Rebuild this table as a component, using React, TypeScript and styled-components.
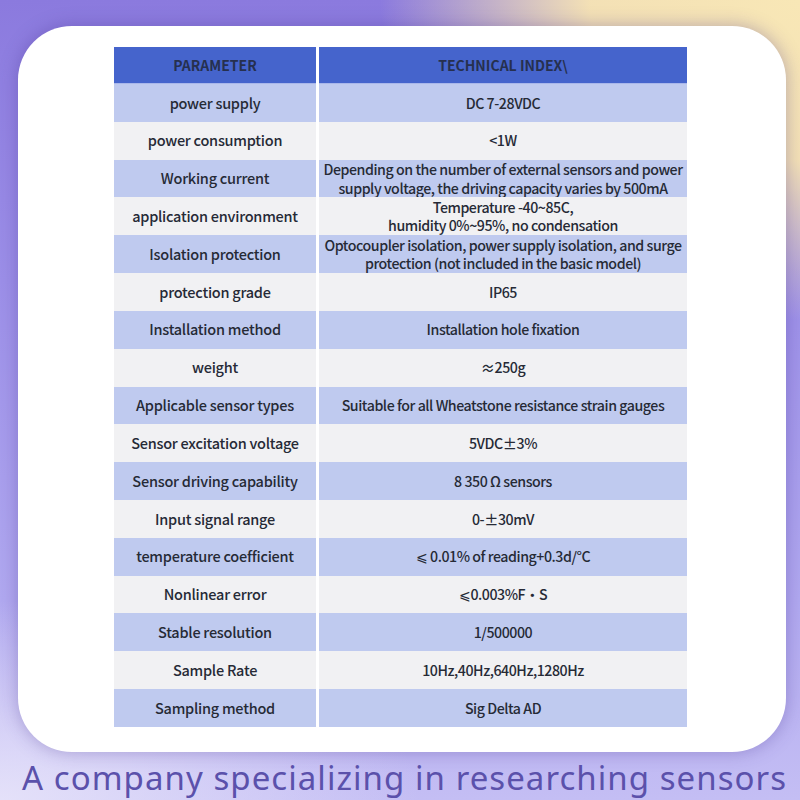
import React from "react";
import styled, { createGlobalStyle } from "styled-components";

const Global = createGlobalStyle`
  html, body { margin: 0; padding: 0; }
  body { width: 800px; height: 800px; overflow: hidden; }
`;

const Page = styled.div`
  position: relative;
  width: 800px;
  height: 800px;
  box-sizing: border-box;
  padding: 26px 14px 0 18px;
  display: flex;
  flex-direction: column;
  background:
    radial-gradient(ellipse 420px 320px at 100% 0%, rgba(248, 231, 182, 1) 0%, rgba(247, 228, 180, 0.97) 50%, rgba(247, 228, 180, 0) 100%),
    radial-gradient(ellipse 420px 200px at 0% 100%, rgba(232, 229, 250, 0.9) 0%, rgba(232, 229, 250, 0) 100%),
    linear-gradient(180deg, #8b7ade 0%, #9c8fe8 35%, #b1a9f0 75%, #c4bef4 100%);
  font-family: "Noto Sans CJK SC", "Noto Sans", sans-serif;
`;

const Card = styled.div`
  width: 768px;
  height: 729px;
  box-sizing: border-box;
  background: #ffffff;
  border-radius: 54px;
  box-shadow: 0 0 18px rgba(70, 50, 140, 0.35);
  padding: 21px 0 0 96px;
`;

const Table = styled.div`
  width: 573px;
  height: 680px;
  display: grid;
  grid-template-columns: 202px 368px;
  grid-template-rows: 37px repeat(17, 37.82px);
  column-gap: 3px;
`;

const HeadCell = styled.div`
  background: #4564cc;
  color: #26304f;
  font-size: 14px;
  font-weight: 700;
  display: flex;
  align-items: center;
  justify-content: center;
  border-bottom: 1px solid #a9b7ea;
  box-sizing: border-box;
`;

const Cell = styled.div<{ $alt: boolean; $value?: boolean }>`
  background: ${(p) => (p.$alt ? "#bfcaef" : "#f1f1f3")};
  color: #262a36;
  font-size: ${(p) => (p.$value ? "14.2px" : "14.5px")};
  font-weight: 500;
  line-height: 18.6px;
  text-align: center;
  display: flex;
  align-items: center;
  justify-content: center;
  white-space: nowrap;
  overflow: hidden;
  letter-spacing: ${(p) => (p.$value ? "-0.45px" : "-0.25px")};
`;

const Slogan = styled.div`
  margin-top: 4px;
  margin-left: 4px;
  color: #5b51ab;
  font-family: "Noto Sans", sans-serif;
  font-size: 33px;
  font-weight: 400;
  letter-spacing: 1.05px;
  line-height: 44px;
  white-space: nowrap;
`;

const rows: [string, React.ReactNode][] = [
  ["power supply", "DC 7-28VDC"],
  ["power consumption", "<1W"],
  [
    "Working current",
    <>
      Depending on the number of external sensors and power
      <br />
      supply voltage, the driving capacity varies by 500mA
    </>,
  ],
  [
    "application environment",
    <>
      Temperature -40~85C,
      <br />
      humidity 0%~95%, no condensation
    </>,
  ],
  [
    "Isolation protection",
    <>
      Optocoupler isolation, power supply isolation, and surge
      <br />
      protection (not included in the basic model)
    </>,
  ],
  ["protection grade", "IP65"],
  ["Installation method", "Installation hole fixation"],
  ["weight", "≈250g"],
  ["Applicable sensor types", "Suitable for all Wheatstone resistance strain gauges"],
  ["Sensor excitation voltage", "5VDC±3%"],
  ["Sensor driving capability", "8 350 Ω sensors"],
  ["Input signal range", "0-±30mV"],
  ["temperature coefficient", "⩽ 0.01% of reading+0.3d/°C"],
  ["Nonlinear error", "⩽0.003%F・S"],
  ["Stable resolution", "1/500000"],
  ["Sample Rate", "10Hz,40Hz,640Hz,1280Hz"],
  ["Sampling method", "Sig Delta AD"],
];

export default function App() {
  return (
    <>
      <Global />
      <Page>
        <Card>
          <Table>
            <HeadCell>PARAMETER</HeadCell>
            <HeadCell>TECHNICAL INDEX\</HeadCell>
            {rows.map(([k, v], i) => (
              <React.Fragment key={i}>
                <Cell $alt={i % 2 === 0}>{k}</Cell>
                <Cell $alt={i % 2 === 0} $value>
                  <span>{v}</span>
                </Cell>
              </React.Fragment>
            ))}
          </Table>
        </Card>
        <Slogan>A company specializing in researching sensors</Slogan>
      </Page>
    </>
  );
}
